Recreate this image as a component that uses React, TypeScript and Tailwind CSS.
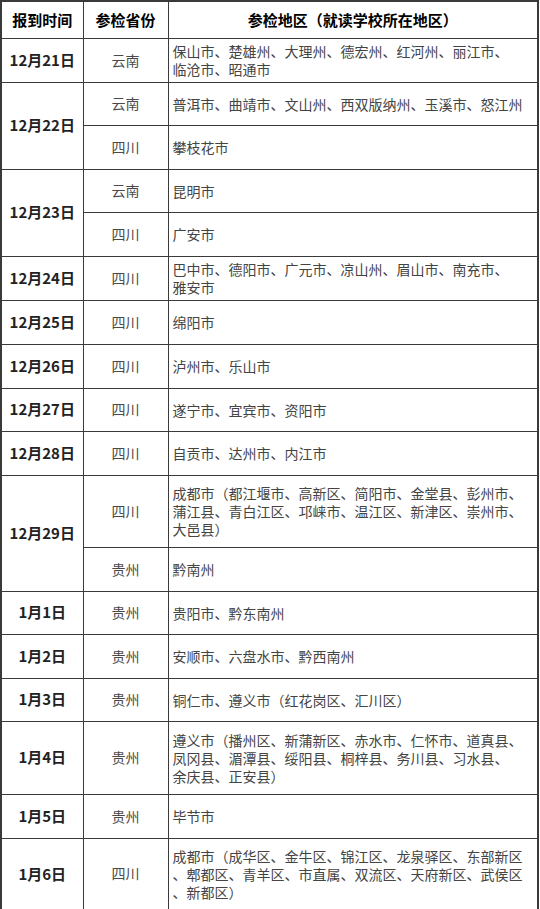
const font = { fontFamily: '"Noto Sans CJK SC", "Noto Sans", sans-serif' };

interface Row {
  date?: string;
  span?: number;
  province: string;
  lines: string[];
  h: string;
}

const rows: Row[] = [
  { date: '12月21日', span: 1, province: '云南', lines: ['保山市、楚雄州、大理州、德宏州、红河州、丽江市、', '临沧市、昭通市'], h: 'h-[44px]' },
  { date: '12月22日', span: 2, province: '云南', lines: ['普洱市、曲靖市、文山州、西双版纳州、玉溪市、怒江州'], h: 'h-[43px]' },
  { province: '四川', lines: ['攀枝花市'], h: 'h-[44px]' },
  { date: '12月23日', span: 2, province: '云南', lines: ['昆明市'], h: 'h-[43px]' },
  { province: '四川', lines: ['广安市'], h: 'h-[44px]' },
  { date: '12月24日', span: 1, province: '四川', lines: ['巴中市、德阳市、广元市、凉山州、眉山市、南充市、', '雅安市'], h: 'h-[44px]' },
  { date: '12月25日', span: 1, province: '四川', lines: ['绵阳市'], h: 'h-[44px]' },
  { date: '12月26日', span: 1, province: '四川', lines: ['泸州市、乐山市'], h: 'h-[44px]' },
  { date: '12月27日', span: 1, province: '四川', lines: ['遂宁市、宜宾市、资阳市'], h: 'h-[43px]' },
  { date: '12月28日', span: 1, province: '四川', lines: ['自贡市、达州市、内江市'], h: 'h-[44px]' },
  {
    date: '12月29日',
    span: 2,
    province: '四川',
    lines: ['成都市（都江堰市、高新区、简阳市、金堂县、彭州市、', '蒲江县、青白江区、邛崃市、温江区、新津区、崇州市、', '大邑县）'],
    h: 'h-[72px]',
  },
  { province: '贵州', lines: ['黔南州'], h: 'h-[44px]' },
  { date: '1月1日', span: 1, province: '贵州', lines: ['贵阳市、黔东南州'], h: 'h-[43px]' },
  { date: '1月2日', span: 1, province: '贵州', lines: ['安顺市、六盘水市、黔西南州'], h: 'h-[44px]' },
  { date: '1月3日', span: 1, province: '贵州', lines: ['铜仁市、遵义市（红花岗区、汇川区）'], h: 'h-[43px]' },
  {
    date: '1月4日',
    span: 1,
    province: '贵州',
    lines: ['遵义市（播州区、新蒲新区、赤水市、仁怀市、道真县、', '凤冈县、湄潭县、绥阳县、桐梓县、务川县、习水县、', '余庆县、正安县）'],
    h: 'h-[73px]',
  },
  { date: '1月5日', span: 1, province: '贵州', lines: ['毕节市'], h: 'h-[44px]' },
  {
    date: '1月6日',
    span: 1,
    province: '四川',
    lines: ['成都市（成华区、金牛区、锦江区、龙泉驿区、东部新区', '、郫都区、青羊区、市直属、双流区、天府新区、武侯区', '、新都区）'],
    h: 'h-[72px]',
  },
];

export default function App() {
  return (
    <div className="w-[540px] h-[909px] bg-white overflow-hidden" style={font}>
      <table className="w-[539px] border-collapse border-2 border-[#3a3a3a] table-fixed">
        <colgroup>
          <col className="w-[82px]" />
          <col className="w-[85px]" />
          <col />
        </colgroup>
        <thead>
          <tr className="h-[37px]">
            <th className="border border-[#3a3a3a] text-[15px] font-bold text-black text-center">报到时间</th>
            <th className="border border-[#3a3a3a] text-[15px] font-bold text-black text-center">参检省份</th>
            <th className="border border-[#3a3a3a] text-[15px] font-bold text-black text-center">参检地区（就读学校所在地区）</th>
          </tr>
        </thead>
        <tbody>
          {rows.map((r, i) => (
            <tr key={i} className={r.h}>
              {r.date && (
                <td rowSpan={r.span} className="border border-[#3a3a3a] text-center text-[15px] font-bold text-[#222]">
                  {r.date}
                </td>
              )}
              <td className="border border-[#3a3a3a] text-center text-[14px] text-[#4a4a4a]">{r.province}</td>
              <td className="border border-[#3a3a3a] pl-[4px] pr-1 text-[14px] leading-[18px] text-[#444] whitespace-nowrap">
                {r.lines.map((l, j) => (
                  <div key={j}>{l}</div>
                ))}
              </td>
            </tr>
          ))}
        </tbody>
      </table>
    </div>
  );
}
